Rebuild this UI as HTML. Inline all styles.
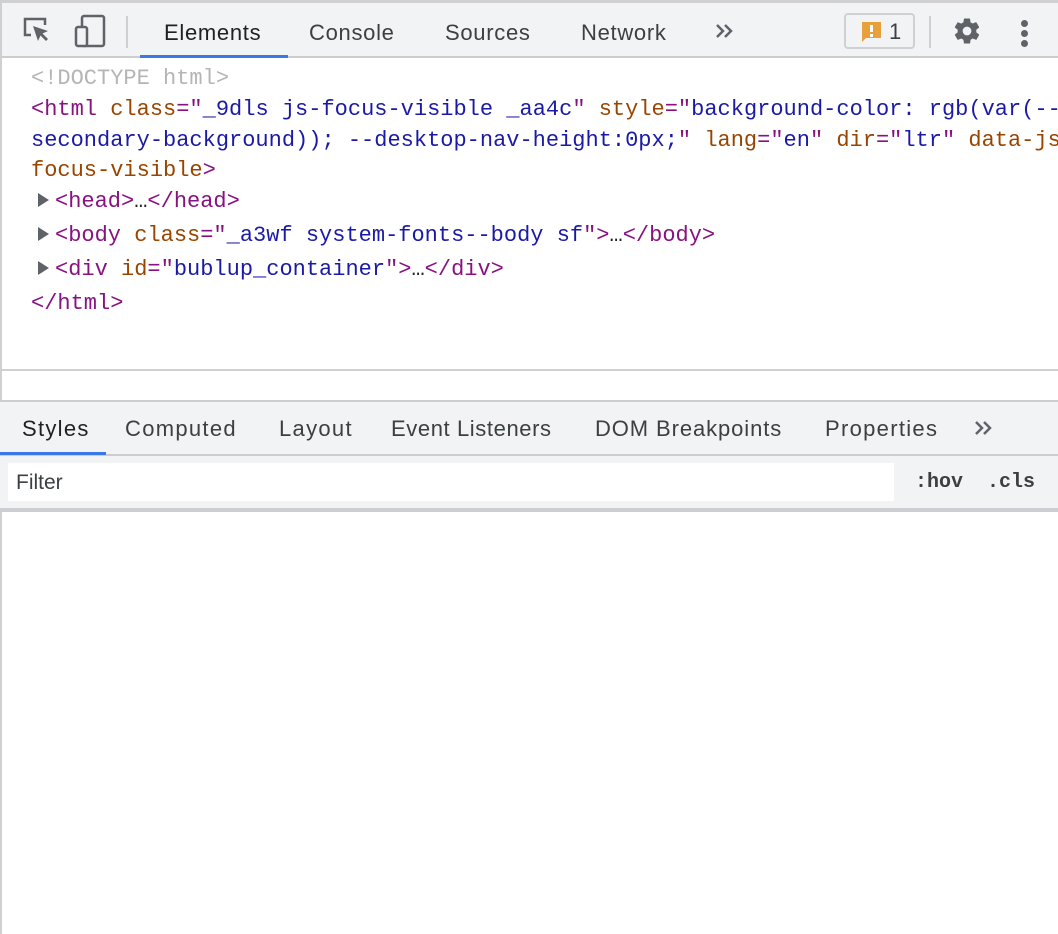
<!DOCTYPE html>
<html><head><meta charset="utf-8"><style>
*{margin:0;padding:0;box-sizing:border-box}
body{width:1058px;height:934px;background:#fff;position:relative;overflow:hidden;font-family:"Liberation Sans",sans-serif}
.abs{position:absolute}
.tb{left:0;top:0;width:1058px;height:58px;background:#f1f3f4;border-top:3px solid #d0d0d3;border-left:2px solid #d0d0d3;border-bottom:2px solid #cbcdd1}
.tab{position:absolute;font-size:22px;color:#3c4043;top:17px;letter-spacing:0.7px}
.bt{letter-spacing:1.3px}
.code{font-family:"Liberation Mono",monospace;font-size:22px;white-space:pre;position:absolute;line-height:26px}
.t{color:#881280}.a{color:#994500}.v{color:#1a1aa6}.g{color:#b5b5b5}.k{color:#222}
.tri{position:absolute;width:0;height:0;border-top:7px solid transparent;border-bottom:7px solid transparent;border-left:11px solid #5f6368}
.lb{left:0;top:0;width:2px;height:934px;background:#d0d0d3}
.chev{position:absolute}
</style></head><body>
<div class="abs lb"></div>
<div class="abs tb">
<svg class="abs" style="left:20px;top:12px" width="32" height="32" viewBox="0 0 32 32"><path d="M9 20H3V4h20v6" fill="none" stroke="#5f6368" stroke-width="2.5"/><path d="M11 11l5 15 2.5-5.5 5.5 5.5 2-2-5.5-5.5L26 16z" fill="#5f6368"/></svg>
<svg class="abs" style="left:70px;top:10px" width="36" height="36" viewBox="0 0 36 36"><rect x="10" y="3" width="22" height="30" rx="2" fill="none" stroke="#5f6368" stroke-width="2.5"/><rect x="4" y="14" width="11" height="19" rx="2" fill="#f1f3f4" stroke="#5f6368" stroke-width="2.5"/></svg>
<div class="abs" style="left:124px;top:13px;width:2px;height:32px;background:#d0d0d3"></div>
<div class="tab" style="left:162px;color:#202124">Elements</div>
<div class="abs" style="left:138px;top:52px;width:148px;height:3px;background:#3b78e7"></div>
<div class="tab" style="left:307px">Console</div>
<div class="tab" style="left:443px">Sources</div>
<div class="tab" style="left:579px">Network</div>
<svg class="chev" style="left:713px;top:20px" width="20" height="16" viewBox="0 0 20 16"><path d="M2 2l6 6-6 6M10 2l6 6-6 6" fill="none" stroke="#5f6368" stroke-width="2.5"/></svg>
<div class="abs" style="left:842px;top:10px;width:71px;height:36px;border:2px solid #d0d0d3;border-radius:4px"></div>
<svg class="abs" style="left:858px;top:17px" width="24" height="24" viewBox="0 0 24 24"><path d="M2 2h19v16H6l-4 4z" fill="#e8a13a"/><rect x="10" y="5" width="3" height="7" fill="#fff"/><rect x="10" y="14" width="3" height="3" fill="#fff"/></svg>
<div class="tab" style="left:887px;top:16px">1</div>
<div class="abs" style="left:927px;top:13px;width:2px;height:32px;background:#d0d0d3"></div>
<svg class="abs" style="left:950px;top:13px" width="30" height="30" viewBox="0 0 24 24"><path fill="#5f6368" d="M19.4 13c.04-.33.06-.66.06-1s-.02-.67-.06-1l2.1-1.65c.19-.15.24-.42.12-.64l-2-3.460c-.12-.22-.39-.3-.61-.22l-2.490 1c-.52-.4-1.080-.73-1.690-.98l-.38-2.650A.49.49 0 0 0 14 2h-4c-.25 0-.46.18-.49.42l-.38 2.650c-.61.25-1.170.59-1.690.98l-2.490-1a.5.5 0 0 0-.61.22l-2 3.460c-.13.22-.07.49.12.64L4.57 11c-.04.33-.07.67-.07 1s.03.67.07 1l-2.110 1.650c-.19.15-.24.42-.12.64l2 3.460c.12.22.39.3.61.22l2.490-1c.52.4 1.080.73 1.690.98l.38 2.650c.03.24.24.42.49.42h4c.25 0 .46-.18.49-.42l.38-2.650c.61-.25 1.170-.59 1.690-.98l2.490 1c.23.09.49 0 .61-.22l2-3.460c.12-.22.07-.49-.12-.64L19.4 13zM12 15.5A3.5 3.5 0 1 1 12 8.5a3.5 3.5 0 0 1 0 7z"/></svg>
<div class="abs" style="left:1019px;top:17px;width:7px;height:7px;border-radius:50%;background:#5f6368"></div>
<div class="abs" style="left:1019px;top:27px;width:7px;height:7px;border-radius:50%;background:#5f6368"></div>
<div class="abs" style="left:1019px;top:37px;width:7px;height:7px;border-radius:50%;background:#5f6368"></div>
</div>

<div class="code g" style="left:31px;top:66px">&lt;!DOCTYPE html&gt;</div>
<div class="code" style="left:31px;top:97px"><span class="t">&lt;html</span> <span class="a">class</span><span class="t">="</span><span class="v">_9dls js-focus-visible _aa4c</span><span class="t">"</span> <span class="a">style</span><span class="t">="</span><span class="v">background-color: rgb(var(--</span></div>
<div class="code v" style="left:31px;top:128px">secondary-background)); --desktop-nav-height:0px;<span class="t">"</span> <span class="a">lang</span><span class="t">="</span>en<span class="t">"</span> <span class="a">dir</span><span class="t">="</span>ltr<span class="t">"</span> <span class="a">data-js</span></div>
<div class="code a" style="left:31px;top:158px">focus-visible<span class="t">&gt;</span></div>
<div class="tri" style="left:38px;top:193px"></div>
<div class="code" style="left:55px;top:189px"><span class="t">&lt;head&gt;</span><span class="k">…</span><span class="t">&lt;/head&gt;</span></div>
<div class="tri" style="left:38px;top:227px"></div>
<div class="code" style="left:55px;top:223px"><span class="t">&lt;body</span> <span class="a">class</span><span class="t">="</span><span class="v">_a3wf system-fonts--body sf</span><span class="t">"&gt;</span><span class="k">…</span><span class="t">&lt;/body&gt;</span></div>
<div class="tri" style="left:38px;top:261px"></div>
<div class="code" style="left:55px;top:257px"><span class="t">&lt;div</span> <span class="a">id</span><span class="t">="</span><span class="v">bublup_container</span><span class="t">"&gt;</span><span class="k">…</span><span class="t">&lt;/div&gt;</span></div>
<div class="code t" style="left:31px;top:291px">&lt;/html&gt;</div>

<div class="abs" style="left:0;top:369px;width:1058px;height:2px;background:#d0d0d3"></div>
<div class="abs" style="left:0;top:400px;width:1058px;height:110px;background:#f1f3f4;border-top:2px solid #cbcdd1"></div>
<div class="abs" style="left:0;top:454px;width:1058px;height:2px;background:#cbcdd1"></div>
<div class="abs" style="left:0;top:452px;width:106px;height:3px;background:#3b78e7"></div>
<div class="tab bt" style="left:22px;top:416px;color:#202124">Styles</div>
<div class="tab bt" style="left:125px;top:416px">Computed</div>
<div class="tab bt" style="left:279px;top:416px">Layout</div>
<div class="tab bt" style="left:391px;top:416px;letter-spacing:0.6px">Event Listeners</div>
<div class="tab bt" style="left:595px;top:416px;letter-spacing:0.9px">DOM Breakpoints</div>
<div class="tab bt" style="left:825px;top:416px">Properties</div>
<svg class="chev" style="left:974px;top:420px" width="20" height="16" viewBox="0 0 20 16"><path d="M2 2l6 6-6 6M10 2l6 6-6 6" fill="none" stroke="#5f6368" stroke-width="2.5"/></svg>
<div class="abs" style="left:8px;top:463px;width:886px;height:38px;background:#fff"></div>
<div class="abs" style="left:16px;top:471px;font-size:21px;color:#3c4043">Filter</div>
<div class="abs" style="left:915px;top:471px;font-family:'Liberation Mono',monospace;font-weight:bold;font-size:20px;color:#3c4043;white-space:pre">:hov  .cls</div>
<div class="abs" style="left:0;top:508px;width:1058px;height:4px;background:#cbcdd1"></div>
</body></html>
